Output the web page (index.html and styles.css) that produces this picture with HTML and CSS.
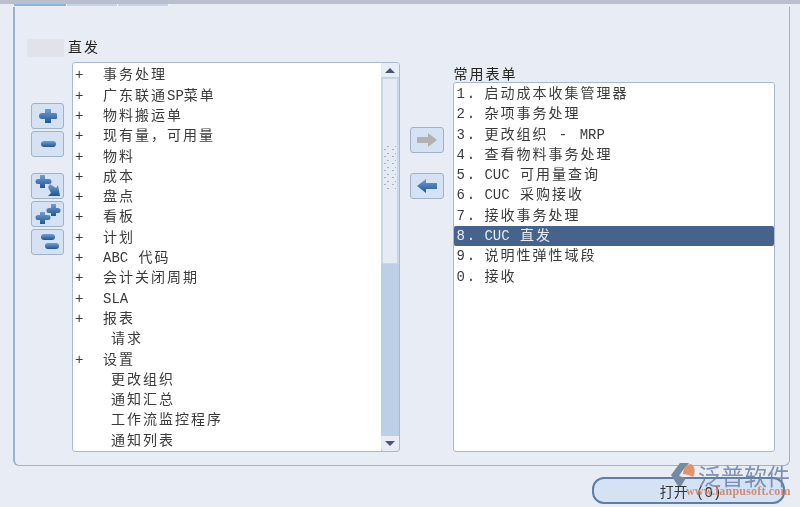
FILE: index.html
```html
<!DOCTYPE html>
<html lang="zh-CN">
<head>
    <meta charset="UTF-8">
    <title>导航器</title>
    <link rel="stylesheet" href="styles.css">
</head>
<body>
    <!-- shared icon gradient -->
    <svg class="defs" width="0" height="0">
        <defs>
            <linearGradient id="blue" x1="0" y1="0" x2="0" y2="1">
                <stop offset="0" stop-color="#6f9fd6"/>
                <stop offset="1" stop-color="#23568f"/>
            </linearGradient>
        </defs>
    </svg>

    <div class="tabstrip">
        <div class="tab tab-active"></div>
        <div class="tab"></div>
        <div class="tab"></div>
    </div>

    <div class="panel">
        <div class="left-col">
            <div class="heading-row">
                <span class="heading-blank"></span>
                <span class="heading">直发</span>
            </div>
            <div class="left-body">
                <div class="tool-col">
                    <div class="tool-group">
                        <button class="tool">
                            <svg width="18" height="18" viewBox="0 0 18 18"><path class="ic-fill" d="M6 2h6v4h4a3 3 0 0 1 0 6h-4v4H6v-4H3a3 3 0 0 1 0-6h3z"/></svg>
                        </button>
                        <button class="tool">
                            <svg width="18" height="18" viewBox="0 0 18 18"><rect class="ic-fill" x="2" y="6" width="15" height="6" rx="3"/></svg>
                        </button>
                    </div>
                    <div class="tool-group">
                        <button class="tool">
                            <svg width="26" height="24" viewBox="0 0 26 24"><path class="ic-fill" d="M5 1h5v4h4a2.5 2.5 0 0 1 0 5h-4v4H5v-4H3a2.5 2.5 0 0 1 0-5h2z"/><path class="ic-fill" d="M13 13l2-3 6 4 2-3 2 11H13l3-3z"/></svg>
                        </button>
                        <button class="tool">
                            <svg width="26" height="24" viewBox="0 0 26 24"><path class="ic-fill" d="M5 10h5v3h3a2.5 2.5 0 0 1 0 5h-3v4H5v-4H3a2.5 2.5 0 0 1 0-5h2z"/><path class="ic-fill" d="M16 2h5v4h2a2.5 2.5 0 0 1 0 5h-2v3h-5v-3h-2a2.5 2.5 0 0 1 0-5h2z"/></svg>
                        </button>
                        <button class="tool">
                            <svg width="26" height="24" viewBox="0 0 26 24"><rect class="ic-fill" x="6" y="4" width="14" height="6" rx="3"/><rect class="ic-fill" x="10" y="13" width="14" height="6" rx="3"/></svg>
                        </button>
                    </div>
                </div>

                <div class="tree">
                    <ul class="tree-list">
                        <li class="tree-row"><span class="plus">+</span>事务处理</li>
                        <li class="tree-row"><span class="plus">+</span>广东联通<span class="latin">SP</span>菜单</li>
                        <li class="tree-row"><span class="plus">+</span>物料搬运单</li>
                        <li class="tree-row"><span class="plus">+</span>现有量，可用量</li>
                        <li class="tree-row"><span class="plus">+</span>物料</li>
                        <li class="tree-row"><span class="plus">+</span>成本</li>
                        <li class="tree-row"><span class="plus">+</span>盘点</li>
                        <li class="tree-row"><span class="plus">+</span>看板</li>
                        <li class="tree-row"><span class="plus">+</span>计划</li>
                        <li class="tree-row"><span class="plus">+</span><span class="latin">ABC</span>&nbsp;代码</li>
                        <li class="tree-row"><span class="plus">+</span>会计关闭周期</li>
                        <li class="tree-row"><span class="plus">+</span><span class="latin">SLA</span></li>
                        <li class="tree-row"><span class="plus">+</span>报表</li>
                        <li class="tree-row tree-leaf">请求</li>
                        <li class="tree-row"><span class="plus">+</span>设置</li>
                        <li class="tree-row tree-leaf">更改组织</li>
                        <li class="tree-row tree-leaf">通知汇总</li>
                        <li class="tree-row tree-leaf">工作流监控程序</li>
                        <li class="tree-row tree-leaf">通知列表</li>
                    </ul>
                    <div class="scrollbar">
                        <div class="sb-btn"><span class="arrow-up"></span></div>
                        <div class="sb-thumb"><div class="sb-grip"></div></div>
                        <div class="sb-track"></div>
                        <div class="sb-btn sb-btn-down"><span class="arrow-down"></span></div>
                    </div>
                </div>
            </div>
        </div>

        <div class="mid-col">
            <button class="tool tool-move">
                <svg width="24" height="16" viewBox="0 0 24 16"><path fill="#b2b2ae" d="M2 5h11V1l9 7-9 7v-4H2z"/></svg>
            </button>
            <button class="tool tool-move">
                <svg width="24" height="16" viewBox="0 0 24 16"><path class="ic-fill" d="M22 5H11V1L2 8l9 7v-4h11z"/></svg>
            </button>
        </div>

        <div class="right-col">
            <div class="list-title">常用表单</div>
            <ol class="fav-list">
                <li class="fav-row"><span class="num">1.</span>启动成本收集管理器</li>
                <li class="fav-row"><span class="num">2.</span>杂项事务处理</li>
                <li class="fav-row"><span class="num">3.</span>更改组织&nbsp;-&nbsp;<span class="latin">MRP</span></li>
                <li class="fav-row"><span class="num">4.</span>查看物料事务处理</li>
                <li class="fav-row"><span class="num">5.</span><span class="latin">CUC</span>&nbsp;可用量查询</li>
                <li class="fav-row"><span class="num">6.</span><span class="latin">CUC</span>&nbsp;采购接收</li>
                <li class="fav-row"><span class="num">7.</span>接收事务处理</li>
                <li class="fav-row fav-selected"><span class="num">8.</span><span class="latin">CUC</span>&nbsp;直发</li>
                <li class="fav-row"><span class="num">9.</span>说明性弹性域段</li>
                <li class="fav-row"><span class="num">0.</span>接收</li>
            </ol>
        </div>
    </div>

    <div class="footer">
        <button class="open-btn">打开 (O)</button>
    </div>

    <div class="watermark">
        <svg class="wm-logo" width="26" height="26" viewBox="0 0 26 26">
            <path fill="#76899f" d="M1 14L10 2h9l-6 7-4 6 7 2-5 8H8z"/>
            <path fill="#e0946a" d="M13 13C13 7 17 3 21 3c4 2 5 8 2 13l-4-2z"/>
        </svg>
        <div class="wm-text">
            <div class="wm-name">泛普软件</div>
            <div class="wm-url">www.fanpusoft.com</div>
        </div>
    </div>
</body>
</html>
```

FILE: styles.css
```css
* {
    margin: 0;
    padding: 0;
    box-sizing: border-box;
}

html, body {
    height: 507px;
    overflow: hidden;
}

body {
    position: relative;
    background: #e8edf5;
    font-family: "Liberation Mono", "Noto Sans CJK SC", monospace;
    font-size: 14px;
    color: #3a3a3a;
    padding: 0 10px 0 13px;
    display: flex;
    flex-direction: column;
    filter: blur(0.35px);
}

.defs {
    position: absolute;
}

.tabstrip {
    height: 7px;
    margin: 0 -10px 0 -13px;
    padding-left: 14px;
    border-top: 4px solid #b9bfcd;
    display: flex;
}

.tab {
    width: 51px;
    height: 2px;
    border-right: 1px solid #f2f5fa;
    background: #c4d4e6;
}

.tab-active {
    width: 53px;
    background: #8fb5da;
}

.panel {
    height: 459px;
    border: 1px solid #9fb2cc;
    border-top: 0;
    border-left-width: 2px;
    border-radius: 0 0 6px 6px;
    padding: 32px 14px 13px 16px;
    display: flex;
}

.left-col {
    width: 370px;
    display: flex;
    flex-direction: column;
}

.heading-row {
    height: 24px;
    margin-left: -4px;
    display: flex;
    align-items: flex-start;
    gap: 4px;
}

.heading-blank {
    width: 37px;
    height: 18px;
    background: #e0e3e9;
}

.heading {
    line-height: 18px;
    letter-spacing: 2px;
    color: #222;
}

.left-body {
    flex: 1;
    display: flex;
    gap: 8px;
}

.tool-col {
    width: 33px;
    padding-top: 41px;
    display: flex;
    flex-direction: column;
    gap: 16px;
}

.tool-group {
    display: flex;
    flex-direction: column;
    gap: 2px;
}

.tool {
    width: 33px;
    height: 26px;
    border: 1px solid #9fb2c8;
    border-radius: 3px;
    background: #d4e2f3;
    display: flex;
    align-items: center;
    justify-content: center;
}

.ic-fill {
    fill: url(#blue);
}

.tree {
    flex: 1;
    background: #fff;
    border: 1px solid #a9bad0;
    border-radius: 3px;
    display: flex;
    overflow: hidden;
}

.tree-list {
    flex: 1;
    list-style: none;
    padding-top: 2px;
}

.tree-row {
    height: 20.3px;
    line-height: 20px;
    letter-spacing: 2px;
    white-space: nowrap;
    display: flex;
}

.plus {
    width: 30px;
    padding-left: 2px;
    flex-shrink: 0;
}

.latin {
    letter-spacing: 0;
}

.tree-leaf {
    padding-left: 38px;
}

.scrollbar {
    width: 18px;
    background: #bdcfe6;
    display: flex;
    flex-direction: column;
}

.sb-btn {
    height: 15px;
    background: #e8edf5;
    display: flex;
    align-items: center;
    justify-content: center;
    border-bottom: 1px solid #c4cfdf;
}

.sb-btn-down {
    border-radius: 0 0 4px 4px;
    border-bottom: 0;
}

.arrow-up {
    border: 5px solid transparent;
    border-top: 0;
    border-bottom: 5px solid #4c5270;
}

.arrow-down {
    border: 5px solid transparent;
    border-bottom: 0;
    border-top: 5px solid #4c5270;
}

.sb-thumb {
    height: 186px;
    padding-top: 64px;
    background: #e4ebf5;
    border: 2px solid #c9d6e7;
    border-width: 1px 2px;
}

.sb-grip {
    width: 12px;
    height: 48px;
    margin-left: 1px;
    background:
        radial-gradient(circle, #a3b3c8 0.8px, transparent 1px) 0 0 / 8px 7px,
        radial-gradient(circle, #a3b3c8 0.8px, transparent 1px) 5px 3px / 8px 7px;
}

.sb-track {
    flex: 1;
}

.mid-col {
    width: 38px;
    padding: 88px 0 0 10px;
    display: flex;
    flex-direction: column;
    gap: 20px;
}

.tool-move {
    width: 34px;
    height: 26px;
}

.right-col {
    width: 322px;
    margin-left: 15px;
    display: flex;
    flex-direction: column;
}

.list-title {
    height: 44px;
    padding-top: 24px;
    margin-bottom: -1px;
    letter-spacing: 2px;
    color: #222;
}

.fav-list {
    flex: 1;
    list-style: none;
    padding-top: 1px;
    background: #fff;
    border: 1px solid #a9bad0;
    border-radius: 3px;
}

.fav-row {
    height: 20.3px;
    line-height: 20px;
    letter-spacing: 2px;
    padding-left: 2px;
    white-space: nowrap;
    display: flex;
}

.num {
    width: 28px;
    flex-shrink: 0;
}

.fav-selected {
    background: #46638c;
    color: #e6ecf4;
    border-radius: 2px;
}

.footer {
    flex: 1;
    display: flex;
    justify-content: flex-end;
    align-items: flex-start;
    padding: 11px 5px 0 0;
}

.open-btn {
    width: 193px;
    height: 27px;
    border: 2px solid #5f7ea6;
    border-radius: 12px;
    background: #d4e2f3;
    font-family: "Liberation Mono", "Noto Sans CJK SC", monospace;
    font-size: 14px;
    padding-left: 4px;
    color: #333;
}

.watermark {
    position: absolute;
    left: 670px;
    top: 461px;
    width: 125px;
    display: flex;
    align-items: flex-start;
    gap: 2px;
}

.wm-text {
    white-space: nowrap;
}

.wm-name {
    font-family: "Noto Sans CJK SC", sans-serif;
    font-size: 23px;
    line-height: 28px;
    color: rgba(108, 128, 165, 0.85);
}

.wm-url {
    font-family: "Liberation Serif", serif;
    font-weight: bold;
    font-size: 12px;
    line-height: 12px;
    letter-spacing: 0.2px;
    color: rgba(210, 130, 100, 0.9);
    margin: -4px 0 0 -12px;
}
```
